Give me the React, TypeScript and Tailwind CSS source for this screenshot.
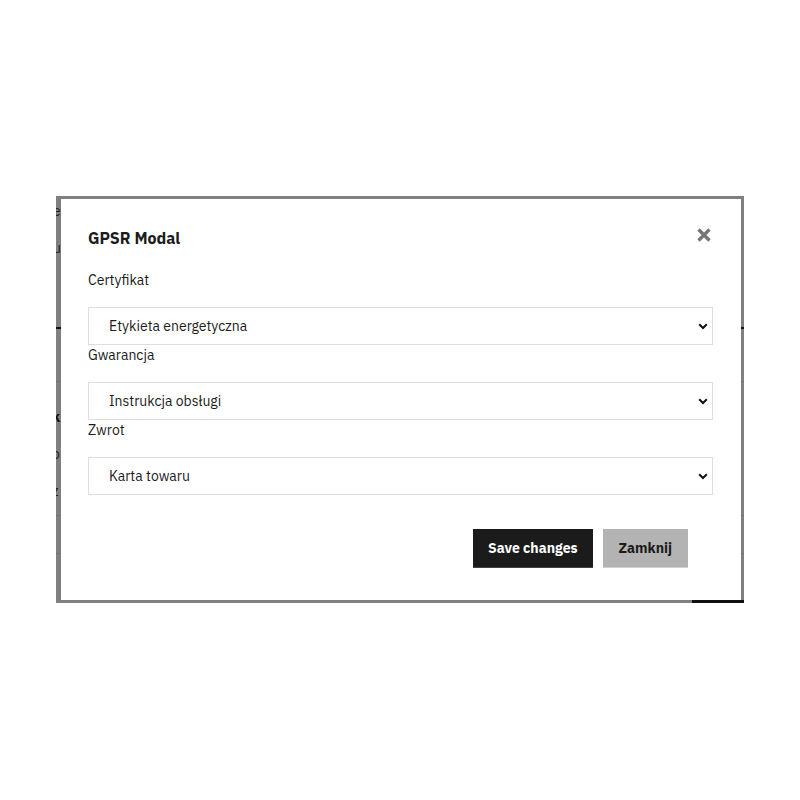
import { useState } from 'react';

const font = { fontFamily: '"IBM Plex Sans", "Noto Sans", "Liberation Sans", sans-serif' };

type Field = { label: string; value: string };

const options = ['Etykieta energetyczna', 'Instrukcja obsługi', 'Karta towaru'];

const fields: Field[] = [
  { label: 'Certyfikat', value: 'Etykieta energetyczna' },
  { label: 'Gwarancja', value: 'Instrukcja obsługi' },
  { label: 'Zwrot', value: 'Karta towaru' },
];

function SelectField({ field }: { field: Field }) {
  const [value, setValue] = useState(field.value);
  return (
    <div className="flex flex-col">
      <label className="text-[14px] leading-[20px] text-[#1b1b1b] mb-[17px]">{field.label}</label>
      <div className="relative">
        <select
          value={value}
          onChange={(e) => setValue(e.target.value)}
          className="appearance-none w-full h-[38px] border border-[#dedede] bg-white pl-[20px] pr-8 text-[14px] text-[#1b1b1b] outline-none"
          style={font}
        >
          {options.map((o) => (
            <option key={o}>{o}</option>
          ))}
        </select>
        <svg className="pointer-events-none absolute right-[5px] top-[16px]" width="10" height="7" viewBox="0 0 10 7">
          <path d="M1.2 1.3 L5 5 L8.8 1.3" fill="none" stroke="#111" strokeWidth="2" />
        </svg>
      </div>
    </div>
  );
}

export default function App() {
  return (
    <div className="w-[800px] h-[800px] bg-white pt-[196px] pl-[56px]" style={font}>
      {/* przyciemnione tło strony */}
      <div className="relative w-[688px] h-[407px] bg-[#808080] pt-[3px] pl-[5px] overflow-hidden">
        <div className="absolute inset-x-0 top-[131px] h-[2px] bg-[#111]" />
        <div className="absolute inset-x-0 top-[185px] h-px bg-[#747474]" />
        <div className="absolute inset-x-0 top-[319px] h-px bg-[#747474]" />
        <div className="absolute inset-x-0 top-[357px] h-px bg-[#747474]" />
        <div className="absolute right-0 bottom-0 w-[52px] h-[3px] bg-[#111]" />
        <div className="absolute left-[-3px] top-[8px] flex flex-col gap-[23px] text-[14px] leading-none text-[#222]">
          <span>e</span>
          <span>u</span>
        </div>
        <div className="absolute left-[-4px] top-[214px] flex flex-col gap-[23px] text-[14px] leading-none text-[#222]">
          <span className="font-bold text-[#111]">k</span>
          <span>o</span>
          <span>z</span>
        </div>

        {/* modal */}
        <div className="relative w-[680px] h-[401px] bg-white pt-[29px] px-[27px]">
          <div className="flex items-center justify-between pr-[2px]">
            <h2 className="text-[16px] leading-[20px] font-bold text-[#1b1b1b]">GPSR Modal</h2>
            <button className="-mt-[6px]" aria-label="Zamknij">
              <svg width="16" height="16" viewBox="0 0 16 16">
                <path d="M2.5 2.5 L13.5 13.5 M13.5 2.5 L2.5 13.5" stroke="#777" strokeWidth="3.4" />
              </svg>
            </button>
          </div>
          <div className="mt-[22px] pr-[1px] flex flex-col">
            {fields.map((f) => (
              <SelectField key={f.label} field={f} />
            ))}
          </div>
          <div className="flex justify-end gap-[10px] mt-[34px] pr-[26px]">
            <button className="h-[39px] px-[15px] bg-[#1b1b1b] text-white text-[14px] font-bold border-b border-[#444]">
              Save changes
            </button>
            <button className="h-[39px] px-[16px] bg-[#b3b3b3] text-[#1b1b1b] text-[14px] font-bold border-b border-[#d0d0d0]">
              Zamknij
            </button>
          </div>
        </div>
      </div>
    </div>
  );
}
